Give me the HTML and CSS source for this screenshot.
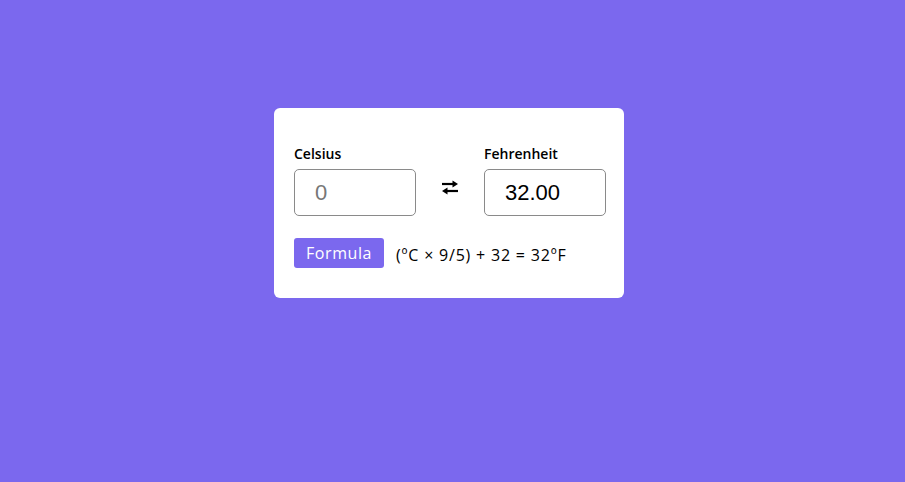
FILE: index.html
```html
<!DOCTYPE html>
<html>
<head>
<meta charset="utf-8">
<link rel="stylesheet" href="styles.css">
</head>
<body>
<div class="page">
  <div class="card">
    <div class="row">
      <div class="field">
        <label class="label">Celsius</label>
        <input class="input input-empty" type="text" placeholder="0">
      </div>
      <div class="swap">
        <svg width="18" height="15" viewBox="0 0 18 15"><path d="M1 4h11" stroke="#000" stroke-width="2.2"/><path d="M11.5 0.5L17 4l-5.5 3.5z" fill="#000"/><path d="M6 11h11" stroke="#000" stroke-width="2.2"/><path d="M6.5 7.5L1 11l5.5 3.5z" fill="#000"/></svg>
      </div>
      <div class="field">
        <label class="label">Fehrenheit</label>
        <input class="input" type="text" value="32.00">
      </div>
    </div>
    <div class="formula-row">
      <button class="btn">Formula</button>
      <span class="formula">(ºC × 9/5) + 32 = 32ºF</span>
    </div>
  </div>
</div>
</body>
</html>
```
FILE: styles.css
```css
html, body {
  margin: 0;
  padding: 0;
  background: #7b68ee;
  height: 100%;
}
.page {
  display: flex;
  justify-content: center;
  padding-top: 108px;
  padding-right: 7px;
}
.card {
  width: 350px;
  height: 190px;
  box-sizing: border-box;
  background: #fff;
  border-radius: 6px;
  padding: 37px 18px 0 20px;
  font-family: "Open Sans", sans-serif;
}
.row {
  display: flex;
  align-items: flex-end;
}
.field {
  display: flex;
  flex-direction: column;
  width: 122px;
  flex-shrink: 0;
}
.label {
  font-size: 14px;
  font-weight: 600;
  line-height: 18px;
  margin-bottom: 6px;
  color: #000;
}
.input {
  width: 122px;
  height: 47px;
  box-sizing: border-box;
  border: 1px solid #8a8a8a;
  border-radius: 5px;
  padding: 0 0 0 20px;
  font-family: "Liberation Sans", Arial, sans-serif;
  font-size: 22px;
  color: #000;
  outline: none;
}
.input::placeholder {
  color: #777;
}
.swap {
  width: 68px;
  height: 47px;
  flex-shrink: 0;
  display: flex;
  align-items: center;
  justify-content: center;
  padding-bottom: 11px;
  padding-right: 1px;
  box-sizing: border-box;
}
.formula-row {
  display: flex;
  align-items: center;
  margin-top: 22px;
}
.btn {
  width: 90px;
  height: 30px;
  border: none;
  border-radius: 3px;
  background: #7b68ee;
  color: #fff;
  font-family: "Open Sans", sans-serif;
  font-size: 16px;
  letter-spacing: 0.6px;
  padding: 0;
}
.formula {
  margin-left: 12px;
  font-size: 16px;
  letter-spacing: 0.8px;
  color: #000;
  margin-top: 4px;
}
```
